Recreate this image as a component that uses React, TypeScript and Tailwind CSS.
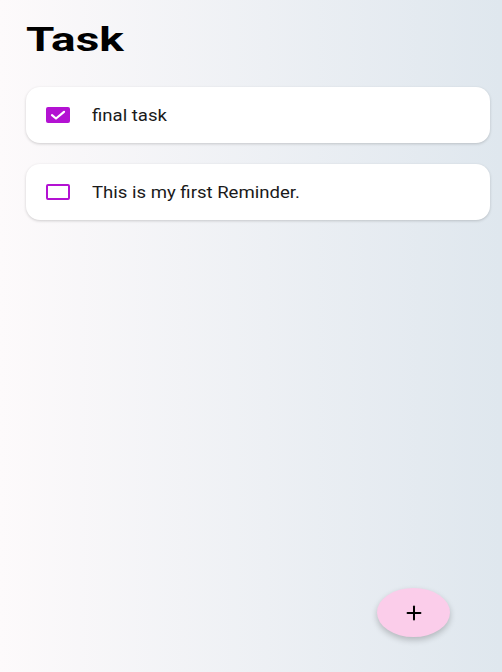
import { Plus } from 'lucide-react'

const tasks = [
  { id: 1, title: 'final task', done: true },
  { id: 2, title: 'This is my first Reminder.', done: false },
]

const Checkbox = ({ checked }: { checked: boolean }) => {
  if (checked) {
    return (
      <div className="flex h-[16px] w-[24px] shrink-0 items-center justify-center rounded-[2px] bg-[#b312d2]">
        <svg viewBox="0 0 24 16" className="h-[16px] w-[24px]">
          <path d="M6 8.2 L10 11.5 L18 4.8" fill="none" stroke="white" strokeWidth="2.2" strokeLinecap="round" strokeLinejoin="round" />
        </svg>
      </div>
    )
  }
  return <div className="h-[16px] w-[24px] shrink-0 rounded-[2px] border-2 border-[#b312d2]" />
}

export default function App() {
  return (
    <div
      className="relative flex h-[672px] w-[502px] flex-col bg-gradient-to-r from-[#fdfafb] to-[#dfe7ee] pl-[26px] pr-[12px]"
      style={{ fontFamily: 'Roboto, "Liberation Sans", sans-serif' }}
    >
      <h1 className="mt-[19px] text-[34px] font-bold leading-[40px] text-black">
        <span className="inline-block origin-left scale-x-[1.35]">Task</span>
      </h1>

      <div className="mt-[28px] flex flex-col gap-[21px]">
        {tasks.map((t) => (
          <div
            key={t.id}
            className="flex h-[56px] items-center gap-[22px] rounded-[14px] bg-white pl-[20px] shadow-[0_1px_3px_rgba(0,0,0,0.18)]"
          >
            <Checkbox checked={t.done} />
            <span className="inline-block origin-left scale-x-[1.16] pt-[1px] text-[16px] text-[#1a1a1a]">{t.title}</span>
          </div>
        ))}
      </div>

      <button className="absolute left-[377px] top-[588px] flex h-[49px] w-[73px] items-center justify-center rounded-[50%] bg-[#fbcdea] shadow-[0_3px_6px_rgba(0,0,0,0.22)]">
        <Plus className="h-[22px] w-[22px] text-black" strokeWidth={2.2} />
      </button>
    </div>
  )
}
